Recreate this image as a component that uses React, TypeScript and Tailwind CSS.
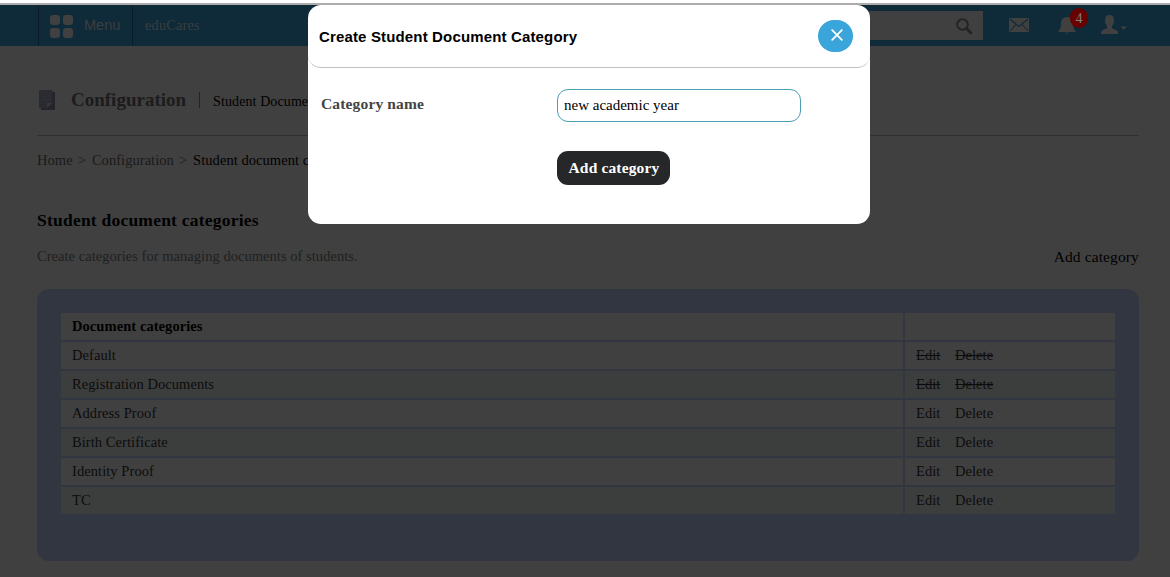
import React from "react";

const rows = [
  { name: "Default", locked: true },
  { name: "Registration Documents", locked: true },
  { name: "Address Proof", locked: false },
  { name: "Birth Certificate", locked: false },
  { name: "Identity Proof", locked: false },
  { name: "TC", locked: false },
];

function Header() {
  return (
    <header className="flex h-[41px] bg-[#0f2a38] pl-[38px]">
      <div className="flex w-[95px] border-x border-[#0a1c26] pl-[11px] pt-[10px]">
        <svg width="23" height="23" viewBox="0 0 23 23" fill="#404040" className="shrink-0">
          <rect x="0" y="0" width="10" height="10" rx="3" />
          <rect x="13" y="0" width="10" height="10" rx="3" />
          <rect x="0" y="13" width="10" height="10" rx="3" />
          <rect x="13" y="13" width="10" height="10" rx="3" />
        </svg>
        <span className="ml-[11px] font-['Liberation_Sans',sans-serif] text-[14.5px] leading-5 text-[#3c3f41]">Menu</span>
      </div>
      <span className="ml-[12px] pt-[10px] text-[14.5px] leading-5 tracking-[0.1px] text-[#3a3e41]">eduCares</span>
      <div className="ml-auto mt-[6px] flex h-[29px] w-[200px] items-center justify-end bg-[#404040] pr-[10px]">
        <svg width="17" height="17" viewBox="0 0 17 17" fill="none" stroke="#232323" strokeLinecap="round" className="mt-px">
          <circle cx="6.5" cy="6.5" r="5.3" strokeWidth="1.9" />
          <path d="M11 11L14.7 14.7" strokeWidth="3" />
        </svg>
      </div>
      <svg width="20" height="14" viewBox="0 0 20 14" className="ml-[26px] mt-[13px] shrink-0">
        <rect width="20" height="14" fill="#404040" />
        <path d="M1 1L10 8.5L19 1M1 13L7 6.5M19 13L13 6.5" fill="none" stroke="#0f2a38" strokeWidth="1.1" />
      </svg>
      <div className="relative ml-[29px] mt-[12px] h-[17px] w-[18px] shrink-0">
        <svg width="18" height="17" viewBox="0 0 18 17" fill="#404040">
          <path d="M0 15Q3 12 3 6Q3 0 9 0Q15 0 15 6Q15 12 18 15ZM7 15.8H11Q9 18 7 15.8Z" />
        </svg>
        <span className="absolute left-[12px] top-[-9px] flex h-[20px] w-[18px] items-center justify-center rounded-full bg-[#680000] text-[14px] text-[#808080]">4</span>
      </div>
      <svg width="27" height="20" viewBox="0 0 27 20" className="ml-[24px] mr-[43px] mt-[10px] shrink-0" fill="#404040">
        <path d="M5 5Q5 0 9.5 0Q14 0 14 5Q14 9 12 11V13.5Q17 14.5 18 17V19H1V17Q2 14.5 7 13.5V11Q5 9 5 5ZM20.5 11.5H27L23.7 14.8Z" />
      </svg>
    </header>
  );
}

export default function App() {
  return (
    <div className="relative h-[577px] w-[1170px] overflow-hidden bg-[#404040] font-['Liberation_Serif',serif]">
      <div className="h-[3px] bg-white" />
      <div className="h-[2px] bg-[#acacac]" />
      <Header />
      <main className="pl-[37px] pr-[31px]">
        <div className="flex h-[90px] items-center border-b border-[#303030] pt-[19px]">
          <svg width="18" height="20" viewBox="0 0 18 20" className="shrink-0">
            <path d="M4 2H18V20H4Z" fill="#24252b" />
            <path d="M2 0H15.5V13L10 18H2Z" fill="#2a2b31" />
            <path d="M4 3.5H13.5M4 6.5H13.5M4 9.5H13.5" stroke="#2d2e35" />
            <path d="M10 18V13H15.5Z" fill="#36373d" />
          </svg>
          <h1 className="ml-[16px] text-[19px] font-bold leading-6 text-[#1c1c1c]">Configuration</h1>
          <div className="ml-[13px] h-[16px] w-px bg-[#242424]" />
          <span className="ml-[13px] whitespace-nowrap pt-[3px] text-[14px] tracking-[0.1px] text-black">Student Document</span>
        </div>
        <nav className="flex h-[48px] items-center whitespace-nowrap pt-[2px] text-[14.5px] tracking-[0.05px] text-[#1a1a1a]">
          <span>Home</span>
          <span className="ml-[5px] mr-[6px]">&gt;</span>
          <span>Configuration</span>
          <span className="ml-[5px] mr-[6px]">&gt;</span>
          <span className="text-black">Student document category</span>
        </nav>
        <h2 className="mt-[26px] text-[17.5px] font-bold leading-5 tracking-[0.22px] text-black">Student document categories</h2>
        <div className="mt-[16px] flex h-[20px] items-center justify-between">
          <p className="pt-[2px] text-[14.5px] tracking-[0.04px] text-[#1f1f1f]">Create categories for managing documents of students.</p>
          <span className="pt-px text-[15.5px] tracking-[0.12px] text-black">Add category</span>
        </div>
        <section className="mt-[23px] h-[272px] rounded-[12px] bg-[#323640] px-[24px] pt-[24px]">
          <div className="flex flex-col gap-[2px] text-[14.5px] leading-[27px] tracking-[0.07px]">
            <div className="flex h-[27px] gap-[2px]">
              <div className="w-[842px] bg-[#404040] pl-[11px] font-bold text-black">Document categories</div>
              <div className="flex-1 bg-[#404040]" />
            </div>
            {rows.map((row, i) => {
              const bg = i % 2 ? "bg-[#3c3e3e]" : "bg-[#404040]";
              return (
                <div key={row.name} className="flex h-[27px] gap-[2px] text-[#0c0c0c]">
                  <div className={`w-[842px] pl-[11px] ${bg}`}>{row.name}</div>
                  <div className={`flex flex-1 gap-[14.5px] pl-[11px] ${bg}`}>
                    <span className={row.locked ? "line-through" : ""}>Edit</span>
                    <span className={row.locked ? "line-through" : ""}>Delete</span>
                  </div>
                </div>
              );
            })}
          </div>
        </section>
      </main>
      <div role="dialog" className="absolute left-[308px] top-[5px] h-[219px] w-[562px] rounded-[13px] bg-white">
        <div className="flex h-[63px] items-center justify-between rounded-[13px] border-b border-[#c0c0c0] pl-[11px] pr-[17px]">
          <h3 className="pt-[2px] font-['Liberation_Sans',sans-serif] text-[15px] font-bold tracking-[0.15px] text-black">Create Student Document Category</h3>
          <button className="flex h-[32px] w-[35px] items-center justify-center rounded-[16px] bg-[#39a5db] pb-[3px] pl-[2px]">
            <svg width="12" height="12" viewBox="0 0 12 12" stroke="white" strokeWidth="1.8" strokeLinecap="round">
              <path d="M1.2 1.2L10.8 10.8M10.8 1.2L1.2 10.8" />
            </svg>
          </button>
        </div>
        <div className="flex pl-[13px] pt-[21px]">
          <label className="w-[236px] pt-[5px] text-[15.5px] font-bold leading-5 tracking-[0.15px] text-[#444]">Category name</label>
          <div className="flex flex-col items-start gap-[29px]">
            <input readOnly value="new academic year" className="h-[33px] w-[244px] rounded-[11px] border border-[#4a9fb5] pl-[6px] text-[15px] text-black outline-none" />
            <button className="h-[34px] w-[113px] rounded-[11px] bg-[#262728] pl-px text-[15.5px] font-bold tracking-[0.15px] text-white">Add category</button>
          </div>
        </div>
      </div>
    </div>
  );
}
